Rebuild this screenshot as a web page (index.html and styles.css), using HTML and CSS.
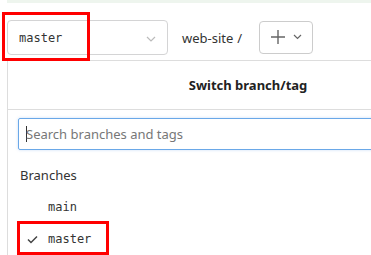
FILE: index.html
```html
<!DOCTYPE html>
<html lang="en">
<head>
  <meta charset="UTF-8" />
  <title>Branch selector</title>
  <link rel="stylesheet" href="styles.css">
</head>
<body>
  <div class="strip"></div>
  <div class="toolbar">
    <div class="select-wrap">
      <div class="select">
        <span class="mono">master</span>
        <svg class="chev" width="10" height="6" viewBox="0 0 10 6"><path d="M1 1 L5 5 L9 1" fill="none" stroke="#bbb" stroke-width="1.2"/></svg>
      </div>
      <div class="mark mark-select"></div>
    </div>
    <span class="repo">web-site</span>
    <span class="slash">/</span>
    <div class="add-btn">
      <svg width="16" height="16" viewBox="0 0 16 16"><path d="M8 1 V15 M1 8 H15" stroke="#666" stroke-width="1.4"/></svg>
      <svg width="9" height="6" viewBox="0 0 9 6"><path d="M1 1 L4.5 4.5 L8 1" fill="none" stroke="#666" stroke-width="1.2"/></svg>
    </div>
  </div>

  <div class="menu">
    <div class="menu-header">Switch branch/tag</div>
    <div class="search">
      <span class="caret"></span>
      <span class="placeholder">Search branches and tags</span>
    </div>
    <div class="section-label">Branches</div>
    <div class="item"><span class="check"></span><span class="mono">main</span></div>
    <div class="item-wrap">
      <div class="item"><span class="check">
        <svg width="11" height="9" viewBox="0 0 11 9"><path d="M1 4.5 L4 7.5 L10 1.5" fill="none" stroke="#444" stroke-width="1.5"/></svg>
      </span><span class="mono">master</span></div>
      <div class="mark mark-item"></div>
    </div>
  </div>
</body>
</html>
```

FILE: styles.css
```css
body { margin: 0; font-family: "Noto Sans", "Open Sans", sans-serif; color: #333; background: #fff; overflow: hidden; }
.mono { font-family: "DejaVu Sans Mono", monospace; font-size: 12px; color: #333; }

.strip { height: 3px; margin-left: 7px; background: #eef5ee; }

.toolbar { display: flex; align-items: center; padding: 17px 0 0 7px; }
.select-wrap { position: relative; }
.select {
  width: 137px;
  height: 32px;
  border: 1px solid #d4d4d5;
  border-radius: 4px;
  display: flex;
  align-items: center;
  justify-content: space-between;
  padding: 1px 11px 0 11px;
}
.chev { margin-top: 1px; }
.repo { margin-left: 14px; font-size: 13px; color: #333; }
.slash { margin-left: 4px; font-size: 13px; color: #333; }
.add-btn {
  margin-left: 17px;
  width: 52px;
  height: 31px;
  border: 1px solid #ccc;
  border-radius: 4px;
  display: flex;
  align-items: center;
  justify-content: center;
  gap: 7px;
  margin-top: -1px;
}

.mark { position: absolute; border: 3px solid #f00; }
.mark-select { left: -5px; top: -8px; width: 82px; height: 43px; }

.menu {
  margin: 5px 0 0 7px;
  width: 480px;
  border-top: 1px solid #ddd;
  border-left: 1px solid #ddd;
}
.menu-header {
  height: 48px;
  display: flex;
  align-items: center;
  justify-content: center;
  font-weight: bold;
  font-size: 13px;
  color: #222;
  border-bottom: 1px solid #ddd;
}
.search {
  margin: 8px 10px 0 10px;
  height: 30px;
  border: 1px solid #6aa8e8;
  border-radius: 2px;
  box-shadow: 0 0 3px rgba(100, 160, 230, 0.35);
  display: flex;
  align-items: center;
  padding-left: 7px;
}
.caret { width: 1px; height: 16px; background: #333; margin-right: -1px; }
.placeholder { font-size: 13px; color: #777; }
.section-label { font-size: 13px; color: #333; padding: 16px 0 0 12px; height: 25px; }
.item { display: flex; align-items: center; height: 32px; padding-left: 19px; }
.check { width: 21px; display: flex; align-items: center; }
.item-wrap { position: relative; }
.mark-item { left: 9px; top: -2px; width: 86px; height: 28px; }
```
